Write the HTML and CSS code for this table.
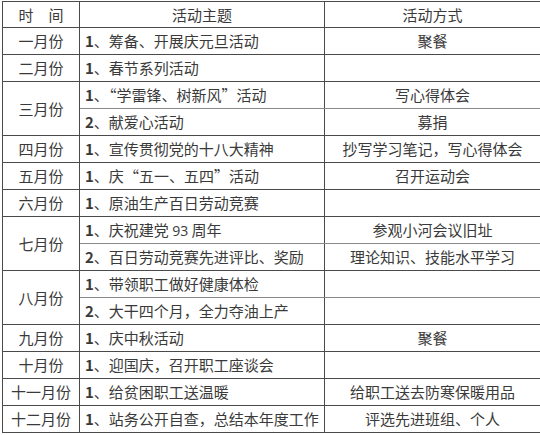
FILE: index.html
```html
<!DOCTYPE html>
<html lang="zh-CN">
<head>
<meta charset="utf-8">
<title>活动安排</title>
<link rel="stylesheet" href="styles.css">
</head>
<body>
<table class="plan">
  <colgroup>
    <col class="c-month">
    <col class="c-topic">
    <col class="c-way">
  </colgroup>
  <tr class="head">
    <td class="month">时　间</td>
    <td class="center">活动主题</td>
    <td class="center">活动方式</td>
  </tr>
  <tr>
    <td class="month">一月份</td>
    <td class="topic"><span class="n">1</span>、筹备、开展庆元旦活动</td>
    <td class="center">聚餐</td>
  </tr>
  <tr>
    <td class="month">二月份</td>
    <td class="topic"><span class="n">1</span>、春节系列活动</td>
    <td class="center"></td>
  </tr>
  <tr>
    <td class="month" rowspan="2">三月份</td>
    <td class="topic sub-top"><span class="n">1</span>、<span class="q">“</span>学雷锋、树新风<span class="q">”</span>活动</td>
    <td class="center sub-top">写心得体会</td>
  </tr>
  <tr>
    <td class="topic"><span class="n">2</span>、献爱心活动</td>
    <td class="center">募捐</td>
  </tr>
  <tr>
    <td class="month">四月份</td>
    <td class="topic"><span class="n">1</span>、宣传贯彻党的十八大精神</td>
    <td class="center">抄写学习笔记，写心得体会</td>
  </tr>
  <tr>
    <td class="month">五月份</td>
    <td class="topic"><span class="n">1</span>、庆<span class="q">“</span>五一、五四<span class="q">”</span>活动</td>
    <td class="center">召开运动会</td>
  </tr>
  <tr>
    <td class="month">六月份</td>
    <td class="topic"><span class="n">1</span>、原油生产百日劳动竞赛</td>
    <td class="center"></td>
  </tr>
  <tr>
    <td class="month" rowspan="2">七月份</td>
    <td class="topic sub-top"><span class="n">1</span>、庆祝建党 <span class="lat">93</span> 周年</td>
    <td class="center sub-top">参观小河会议旧址</td>
  </tr>
  <tr>
    <td class="topic"><span class="n">2</span>、百日劳动竞赛先进评比、奖励</td>
    <td class="center">理论知识、技能水平学习</td>
  </tr>
  <tr>
    <td class="month" rowspan="2">八月份</td>
    <td class="topic sub-top"><span class="n">1</span>、带领职工做好健康体检</td>
    <td class="center sub-top"></td>
  </tr>
  <tr>
    <td class="topic"><span class="n">2</span>、大干四个月，全力夺油上产</td>
    <td class="center"></td>
  </tr>
  <tr>
    <td class="month">九月份</td>
    <td class="topic"><span class="n">1</span>、庆中秋活动</td>
    <td class="center">聚餐</td>
  </tr>
  <tr>
    <td class="month">十月份</td>
    <td class="topic"><span class="n">1</span>、迎国庆，召开职工座谈会</td>
    <td class="center"></td>
  </tr>
  <tr>
    <td class="month">十一月份</td>
    <td class="topic"><span class="n">1</span>、给贫困职工送温暖</td>
    <td class="center">给职工送去防寒保暖用品</td>
  </tr>
  <tr>
    <td class="month">十二月份</td>
    <td class="topic"><span class="n">1</span>、站务公开自查，总结本年度工作</td>
    <td class="center">评选先进班组、个人</td>
  </tr>
</table>
</body>
</html>
```
FILE: styles.css
```css
html, body {
  margin: 0;
  background: #ffffff;
}

body {
  padding: 1px 1px 0 2px;
  font-family: "Noto Sans CJK SC", "Noto Sans", sans-serif;
  font-size: 15px;
  color: #3a3a3a;
}

.plan {
  border-collapse: collapse;
  table-layout: fixed;
  width: 538px;
  border: 1px solid #3c3c3c;
}

.c-month { width: 77px; }
.c-topic { width: 245px; }
.c-way { width: 216px; }

.plan td {
  border: 1px solid #4a4a4a;
  height: 26px;
  padding: 0;
  line-height: 18px;
  vertical-align: middle;
  white-space: nowrap;
  overflow: hidden;
}

.plan tr.head td {
  height: 25px;
}

.month {
  text-align: center;
}

.center {
  text-align: center;
}

.topic {
  text-align: left;
  padding-left: 5px !important;
}

.n {
  font-weight: 700;
}

.q {
  font-feature-settings: "fwid" 1;
}

.lat {
  font-family: "Open Sans", "Liberation Sans", sans-serif;
  font-size: 14px;
}

.sub-top {
  border-bottom-color: #8a8a8a !important;
}
```
